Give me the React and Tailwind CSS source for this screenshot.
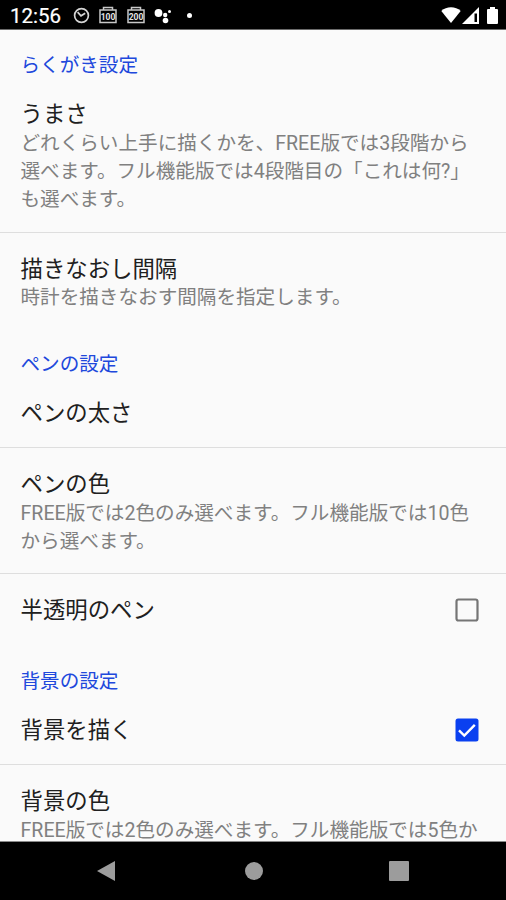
import React, { useState } from 'react';

const sections = [
  {
    title: 'らくがき設定',
    items: [
      {
        id: 'skill',
        title: 'うまさ',
        summary: [
          'どれくらい上手に描くかを、FREE版では3段階から',
          '選べます。フル機能版では4段階目の「これは何?」',
          'も選べます。',
        ],
      },
      { id: 'interval', title: '描きなおし間隔', summary: ['時計を描きなおす間隔を指定します。'] },
    ],
  },
  {
    title: 'ペンの設定',
    items: [
      { id: 'penWidth', title: 'ペンの太さ' },
      {
        id: 'penColor',
        title: 'ペンの色',
        summary: ['FREE版では2色のみ選べます。フル機能版では10色', 'から選べます。'],
      },
      { id: 'penAlpha', title: '半透明のペン', checkbox: true },
    ],
  },
  {
    title: '背景の設定',
    items: [
      { id: 'drawBg', title: '背景を描く', checkbox: true },
      { id: 'bgColor', title: '背景の色', summary: ['FREE版では2色のみ選べます。フル機能版では5色か'] },
    ],
  },
];

const CalendarIcon = ({ label }) => (
  <svg width="18" height="18" viewBox="0 0 18 18" fill="none" stroke="#c8c8c8">
    <path d="M1 4h16v12.500H1z" strokeWidth="1.500" />
    <path d="M4.500 4V1.500h9V4" strokeWidth="1.500" />
    <text x="9" y="13.600" fill="#e5e5e5" stroke="none" fontSize="8.500" fontWeight="700" textAnchor="middle" fontFamily="Roboto, sans-serif">
      {label}
    </text>
  </svg>
);

const StatusBar = () => (
  <div className="flex h-[30px] shrink-0 items-center border-b border-[#6b6b6b] bg-black pl-[10px] pr-[8px] text-white">
    <span className="w-[63px] pt-[3px] text-[20.500px] leading-7 [-webkit-text-stroke:0.2px_white]">12:56</span>
    <svg className="mt-[2px]" width="17" height="17" viewBox="0 0 17 17" fill="none" stroke="#d4d4d4">
      <circle cx="8.500" cy="8.500" r="6.900" strokeWidth="1.700" />
      <path d="M4.600 5.200l3.400 3.600 4.200-2.500" strokeWidth="1.700" />
    </svg>
    <div className="ml-[9px] mt-px flex gap-[10px]">
      <CalendarIcon label="100" />
      <CalendarIcon label="200" />
    </div>
    <svg className="ml-[9px] mt-[2px]" width="18" height="18" viewBox="0 0 18 18" fill="white">
      <circle cx="4.500" cy="6" r="3.900" />
      <circle cx="11.200" cy="8" r="2.200" />
      <circle cx="15.500" cy="4.500" r="1.500" />
      <circle cx="11.500" cy="13.500" r="2.800" />
    </svg>
    <span className="ml-[15px] mt-[2px] h-[5px] w-[5px] rounded-full bg-white" />
    <div className="ml-auto mt-px flex items-center">
      <svg width="20" height="16" viewBox="0 0 20 16" fill="white">
        <path d="M10 16L.3 4C3 1.600 6.300.3 10 .3S17 1.600 19.700 4z" />
      </svg>
      <svg className="ml-px" width="17" height="17" viewBox="0 0 17 17">
        <path d="M0 17L17 0v17z" fill="white" />
        <path d="M12.500 6.500h2.500v8.500h-2.500z" fill="black" />
      </svg>
      <svg className="ml-[8px]" width="11" height="17" viewBox="0 0 11 17" fill="white">
        <path d="M3 0h5v2h2q1 0 1 1v13q0 1-1 1H1q-1 0-1-1V3q0-1 1-1h2z" />
      </svg>
    </div>
  </div>
);

const Checkbox = ({ checked }) =>
  checked ? (
    <svg width="24" height="24" viewBox="0 0 24 24" fill="none">
      <rect x="0.500" y="0.500" width="23" height="23" rx="2.500" fill="#0a40f0" />
      <path d="M4 12.300l5.300 5.200L19.800 6.800" stroke="white" strokeWidth="2.400" />
    </svg>
  ) : (
    <svg width="24" height="24" viewBox="0 0 24 24" fill="none">
      <rect x="1.500" y="1.500" width="21" height="21" rx="2" stroke="#757575" strokeWidth="2.200" />
    </svg>
  );

const rowPadding = (item, last) => {
  if (last) return item.summary ? 'pb-[16.5px]' : 'pb-[22px]';
  return item.summary ? 'border-b border-[#dedede] pb-[17px]' : 'border-b border-[#dedede] pb-[20px]';
};

const Preference = ({ item, first, last, checked, onToggle }) => (
  <div
    onClick={item.checkbox ? onToggle : undefined}
    className={`flex items-center justify-between pl-[20.5px] pr-[27px] ${first ? 'pt-[20.5px]' : 'pt-[22px]'} ${rowPadding(item, last)}`}
  >
    <div>
      <div className="text-[22.4px] leading-7 text-[#202020]">{item.title}</div>
      {item.summary && (
        <div className="pt-[1.5px] text-[19.6px] leading-[28.4px] text-[#808080]">
          {item.summary.map((line) => (
            <div key={line} className="whitespace-nowrap">{line}</div>
          ))}
        </div>
      )}
    </div>
    {item.checkbox && <Checkbox checked={checked} />}
  </div>
);

const NavigationBar = () => (
  <div className="flex h-[58px] shrink-0 items-center justify-between bg-black pl-[96px] pr-[97px]">
    <svg width="20" height="22" viewBox="0 0 20 22" fill="#9c9c9c">
      <path d="M1 11L19 1v20z" />
    </svg>
    <span className="ml-[2px] h-[18px] w-[18px] rounded-full bg-[#9c9c9c]" />
    <span className="h-[20px] w-[20px] rounded-[1px] bg-[#9c9c9c]" />
  </div>
);

const App = () => {
  const [values, setValues] = useState({ penAlpha: false, drawBg: true });

  const toggle = (id) => {
    setValues((prev) => ({ ...prev, [id]: !prev[id] }));
  };

  return (
    <div className="flex h-[900px] w-[506px] flex-col overflow-hidden bg-[#fafafa] font-[Roboto,'Noto_Sans_CJK_JP',sans-serif]">
      <StatusBar />
      <div className="min-h-0 flex-1 overflow-hidden border-b border-[#8a8a8a]">
        {sections.map((section) => (
          <div key={section.title} className="pt-[21.5px]">
            <h2 className="pl-[20.5px] text-[19.6px] leading-7 text-[#2048dc]">{section.title}</h2>
            {section.items.map((item, i) => (
              <Preference
                key={item.id}
                item={item}
                first={i === 0}
                last={i === section.items.length - 1}
                checked={values[item.id]}
                onToggle={() => toggle(item.id)}
              />
            ))}
          </div>
        ))}
      </div>
      <NavigationBar />
    </div>
  );
};

export default App;
